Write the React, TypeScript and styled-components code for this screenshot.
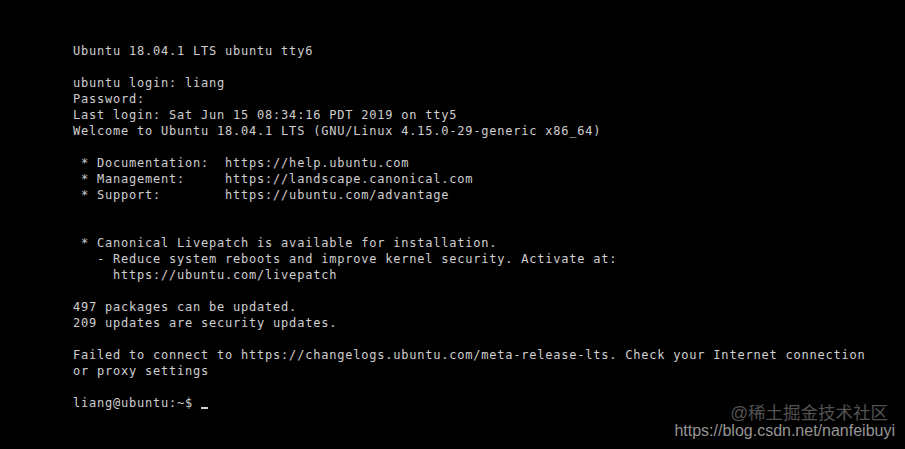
import React from "react";
import styled, { createGlobalStyle } from "styled-components";

const Global = createGlobalStyle`
  html, body { margin: 0; padding: 0; background: #000; }
  #root { width: 905px; height: 449px; }
`;

const Screen = styled.div`
  position: relative;
  width: 905px;
  height: 449px;
  background: #000;
  overflow: hidden;
  box-sizing: border-box;
  padding: 43px 0 0 73px;
`;

const Console = styled.pre`
  margin: 0;
  font-family: "DejaVu Sans Mono", "Liberation Mono", monospace;
  font-size: 12px;
  letter-spacing: 0.78px;
  line-height: 16px;
  color: #cfcfcf;
  white-space: pre;
`;

const Cursor = styled.span`
  display: inline-block;
  width: 7px;
  height: 2px;
  background: #d0d0d0;
  vertical-align: -2px;
`;

const Watermark = styled.div`
  position: absolute;
  right: 10px;
  bottom: 9px;
  display: flex;
  flex-direction: column;
  align-items: flex-end;
  font-family: "Liberation Sans", "Noto Sans CJK SC", sans-serif;
  font-size: 16px;
  line-height: 18px;
  color: rgba(200, 200, 200, 0.75);
`;

const MarkLine = styled.span<{ $shift?: number; $faint?: boolean; $size?: number }>`
  margin-right: ${(p) => p.$shift ?? 0}px;
  opacity: ${(p) => (p.$faint ? 0.55 : 1)};
  font-size: ${(p) => p.$size ?? 16}px;
`;

const lines = [
  "Ubuntu 18.04.1 LTS ubuntu tty6",
  "",
  "ubuntu login: liang",
  "Password:",
  "Last login: Sat Jun 15 08:34:16 PDT 2019 on tty5",
  "Welcome to Ubuntu 18.04.1 LTS (GNU/Linux 4.15.0-29-generic x86_64)",
  "",
  " * Documentation:  https://help.ubuntu.com",
  " * Management:     https://landscape.canonical.com",
  " * Support:        https://ubuntu.com/advantage",
  "",
  "",
  " * Canonical Livepatch is available for installation.",
  "   - Reduce system reboots and improve kernel security. Activate at:",
  "     https://ubuntu.com/livepatch",
  "",
  "497 packages can be updated.",
  "209 updates are security updates.",
  "",
  "Failed to connect to https://changelogs.ubuntu.com/meta-release-lts. Check your Internet connection",
  "or proxy settings",
  "",
];

export default function App() {
  return (
    <>
      <Global />
      <Screen>
        <Console>
          {lines.join("\n")}
          {"\nliang@ubuntu:~$ "}
          <Cursor />
        </Console>
        <Watermark>
          <MarkLine $shift={7} $faint $size={17.5}>@稀土掘金技术社区</MarkLine>
          <MarkLine>https://blog.csdn.net/nanfeibuyi</MarkLine>
        </Watermark>
      </Screen>
    </>
  );
}
